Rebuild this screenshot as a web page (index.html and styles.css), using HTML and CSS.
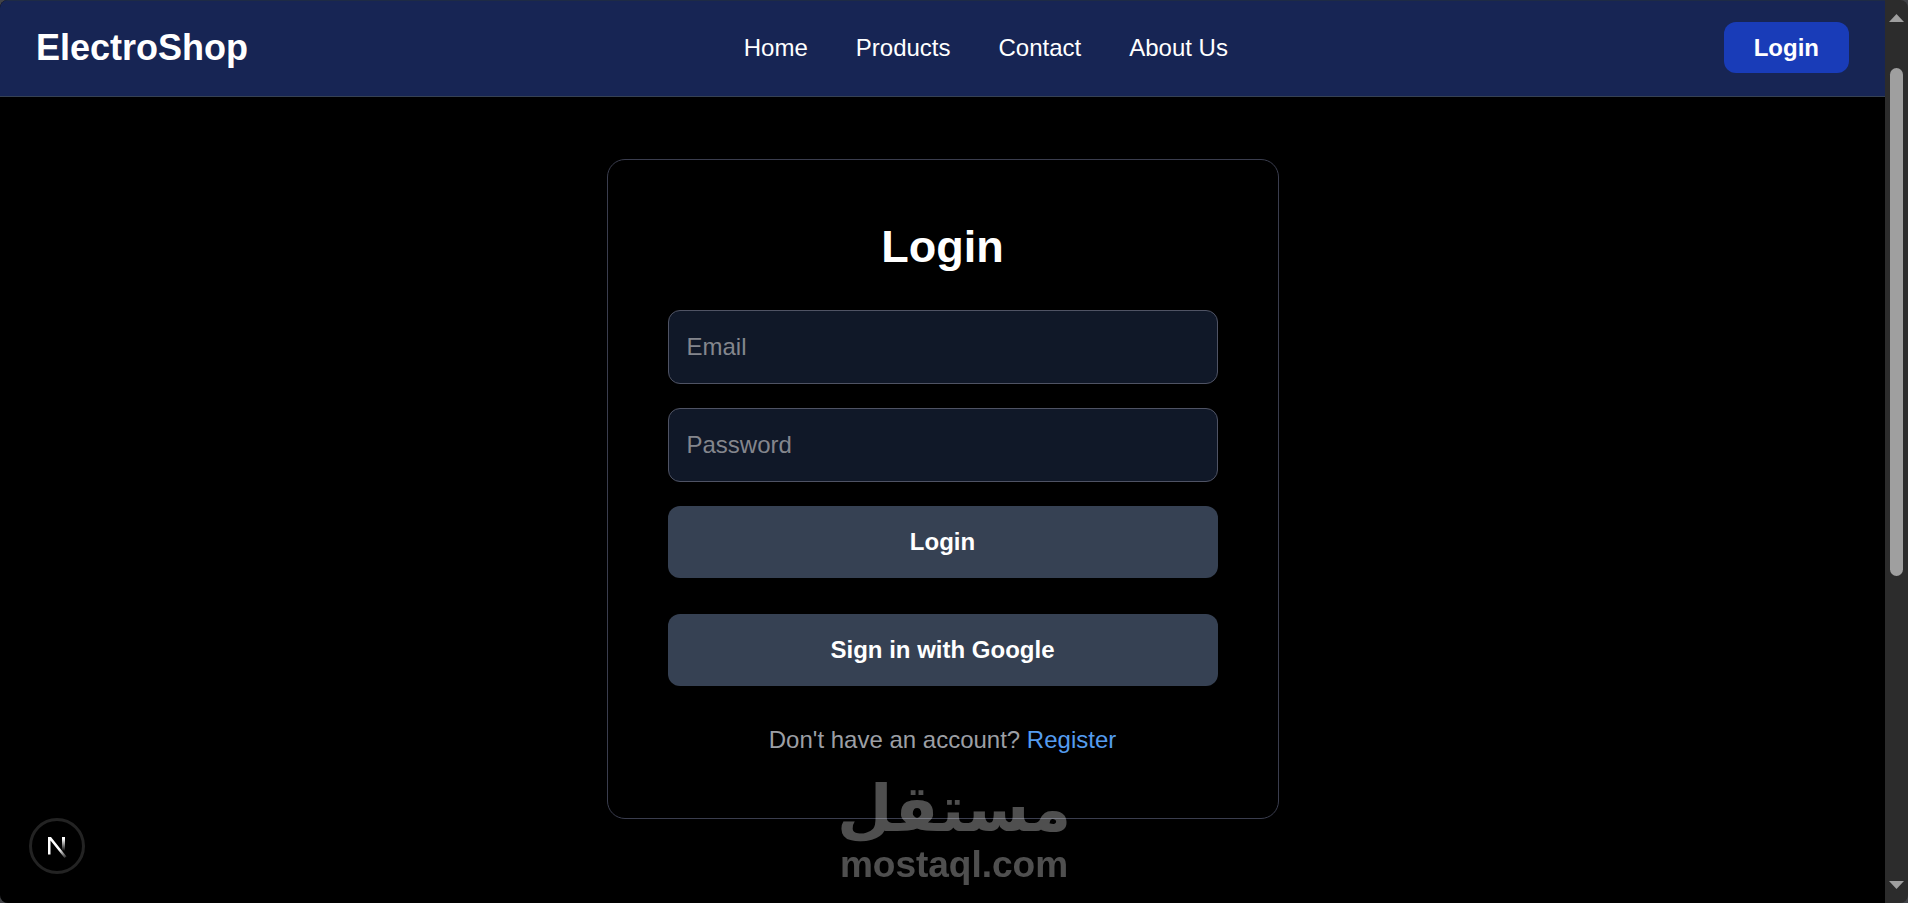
FILE: index.html
```html
<!DOCTYPE html>
<html lang="en">
<head>
  <meta charset="utf-8">
  <meta name="viewport" content="width=device-width, initial-scale=1">
  <title>ElectroShop - Login</title>
  <link rel="stylesheet" href="styles.css">
</head>
<body>
  <div class="window">
    <div class="page">
      <header class="header">
        <a class="brand" href="#">ElectroShop</a>
        <nav class="nav">
          <a href="#">Home</a>
          <a href="#">Products</a>
          <a href="#">Contact</a>
          <a href="#">About Us</a>
        </nav>
        <button class="header-login" type="button">Login</button>
      </header>
      <main class="main">
        <section class="card">
          <h1 class="title">Login</h1>
          <form class="form">
            <input class="field" type="email" placeholder="Email" aria-label="Email">
            <input class="field" type="password" placeholder="Password" aria-label="Password">
            <button class="button" type="button">Login</button>
          </form>
          <button class="button" type="button">Sign in with Google</button>
          <p class="hint">Don't have an account? <a href="#">Register</a></p>
        </section>
      </main>
    </div>
    <div class="scrollbar">
      <svg width="15" height="8" viewBox="0 0 15 8"><path d="M0 8 7.500 0 15 8z"/></svg>
      <div class="track"><div class="thumb"></div></div>
      <svg width="15" height="8" viewBox="0 0 15 8"><path d="M0 0H15L7.500 8z"/></svg>
    </div>
  </div>

  <button class="dev-badge" type="button" aria-label="Open developer tools">
    <svg width="50" height="50" viewBox="0 0 50 50" fill="none">
      <defs>
        <linearGradient id="diag" gradientUnits="userSpaceOnUse" x1="28" y1="28" x2="35" y2="38">
          <stop stop-color="#fff"/><stop offset="1" stop-color="#fff" stop-opacity="0"/>
        </linearGradient>
        <linearGradient id="stem" gradientUnits="userSpaceOnUse" x1="0" y1="18" x2="0" y2="30">
          <stop stop-color="#fff"/><stop offset="1" stop-color="#fff" stop-opacity="0"/>
        </linearGradient>
      </defs>
      <path d="M16 16h3L34.500 35.500l-2 1.500L18.500 19.500V33.500H16z" fill="url(#diag)"/>
      <path d="M30 16h3v14h-3z" fill="url(#stem)"/>
    </svg>
  </button>

  <div class="watermark">
    <span class="watermark-ar" lang="ar" dir="rtl">مستقل</span>
    <span class="watermark-en">mostaql.com</span>
  </div>
</body>
</html>
```
FILE: styles.css
```css
* {
  box-sizing: border-box;
}

body {
  margin: 0;
  background: #424347;
  color: #fff;
  font: 24px/36px "Liberation Sans", Arial, sans-serif;
}

a {
  color: inherit;
  text-decoration: none;
}

button,
input {
  font: inherit;
  color: inherit;
}

.window {
  display: flex;
  min-height: 100vh;
  overflow: hidden;
  border-radius: 8px;
  background: #2c2c2c;
}

.page {
  flex: 1;
  display: flex;
  flex-direction: column;
  background: #000;
}

.header {
  display: flex;
  align-items: center;
  justify-content: space-between;
  padding: 21px 36px 23px;
  background: #172554;
  border-top: 1px solid #1e2b45;
  border-bottom: 1px solid #364153;
}

.brand {
  font-size: 36px;
  font-weight: 700;
}

.nav {
  display: flex;
  gap: 48px;
}

.header-login {
  padding: 8px 30px;
  border: 0;
  border-radius: 12px;
  background: #193cb8;
  font-weight: 700;
  line-height: 35px;
}

.main {
  flex: 1;
  display: flex;
  justify-content: center;
  align-items: flex-start;
  padding: 62px 24px 24px;
}

.card {
  display: flex;
  flex-direction: column;
  gap: 36px;
  width: 100%;
  max-width: 672px;
  padding: 60px;
  border: 1px solid #3a3d4e;
  border-radius: 18px;
}

.title {
  margin: 0;
  font-size: 45px;
  line-height: 54px;
  text-align: center;
}

.form {
  display: flex;
  flex-direction: column;
  gap: 24px;
}

.field {
  width: 100%;
  height: 74px;
  padding: 18px;
  border: 1px solid #4f5364;
  border-radius: 12px;
  background: #101828;
}

.field::placeholder {
  color: #84868d;
  opacity: 1;
}

.button {
  padding: 18px;
  border: 0;
  border-radius: 12px;
  background: #364153;
  font-weight: 700;
}

.hint {
  margin: 0;
  color: #9c9fa5;
  text-align: center;
}

.hint a {
  color: #549cf0;
}

.scrollbar {
  display: flex;
  flex-direction: column;
  align-items: center;
  width: 23px;
  padding: 14px 0;
  fill: #9f9f9f;
}

.track {
  flex: 1;
  width: 13px;
  padding: 46px 0 20px;
}

.thumb {
  height: 64%;
  border-radius: 7px;
  background: #9f9f9f;
}

.dev-badge {
  position: fixed;
  left: 29px;
  bottom: 29px;
  padding: 0;
  width: 56px;
  height: 56px;
  border: 3px solid #232323;
  border-radius: 50%;
  background: #000;
}

.dev-badge svg {
  display: block;
}

.watermark {
  position: fixed;
  left: 50%;
  bottom: 16px;
  transform: translateX(-50%);
  display: flex;
  flex-direction: column;
  align-items: center;
  gap: 2px;
  opacity: 0.31;
  font-weight: 700;
  pointer-events: none;
}

.watermark-ar {
  font-family: "DejaVu Sans", sans-serif;
  font-size: 64px;
  line-height: 64px;
}

.watermark-en {
  font-size: 37px;
  line-height: 44px;
}
```
